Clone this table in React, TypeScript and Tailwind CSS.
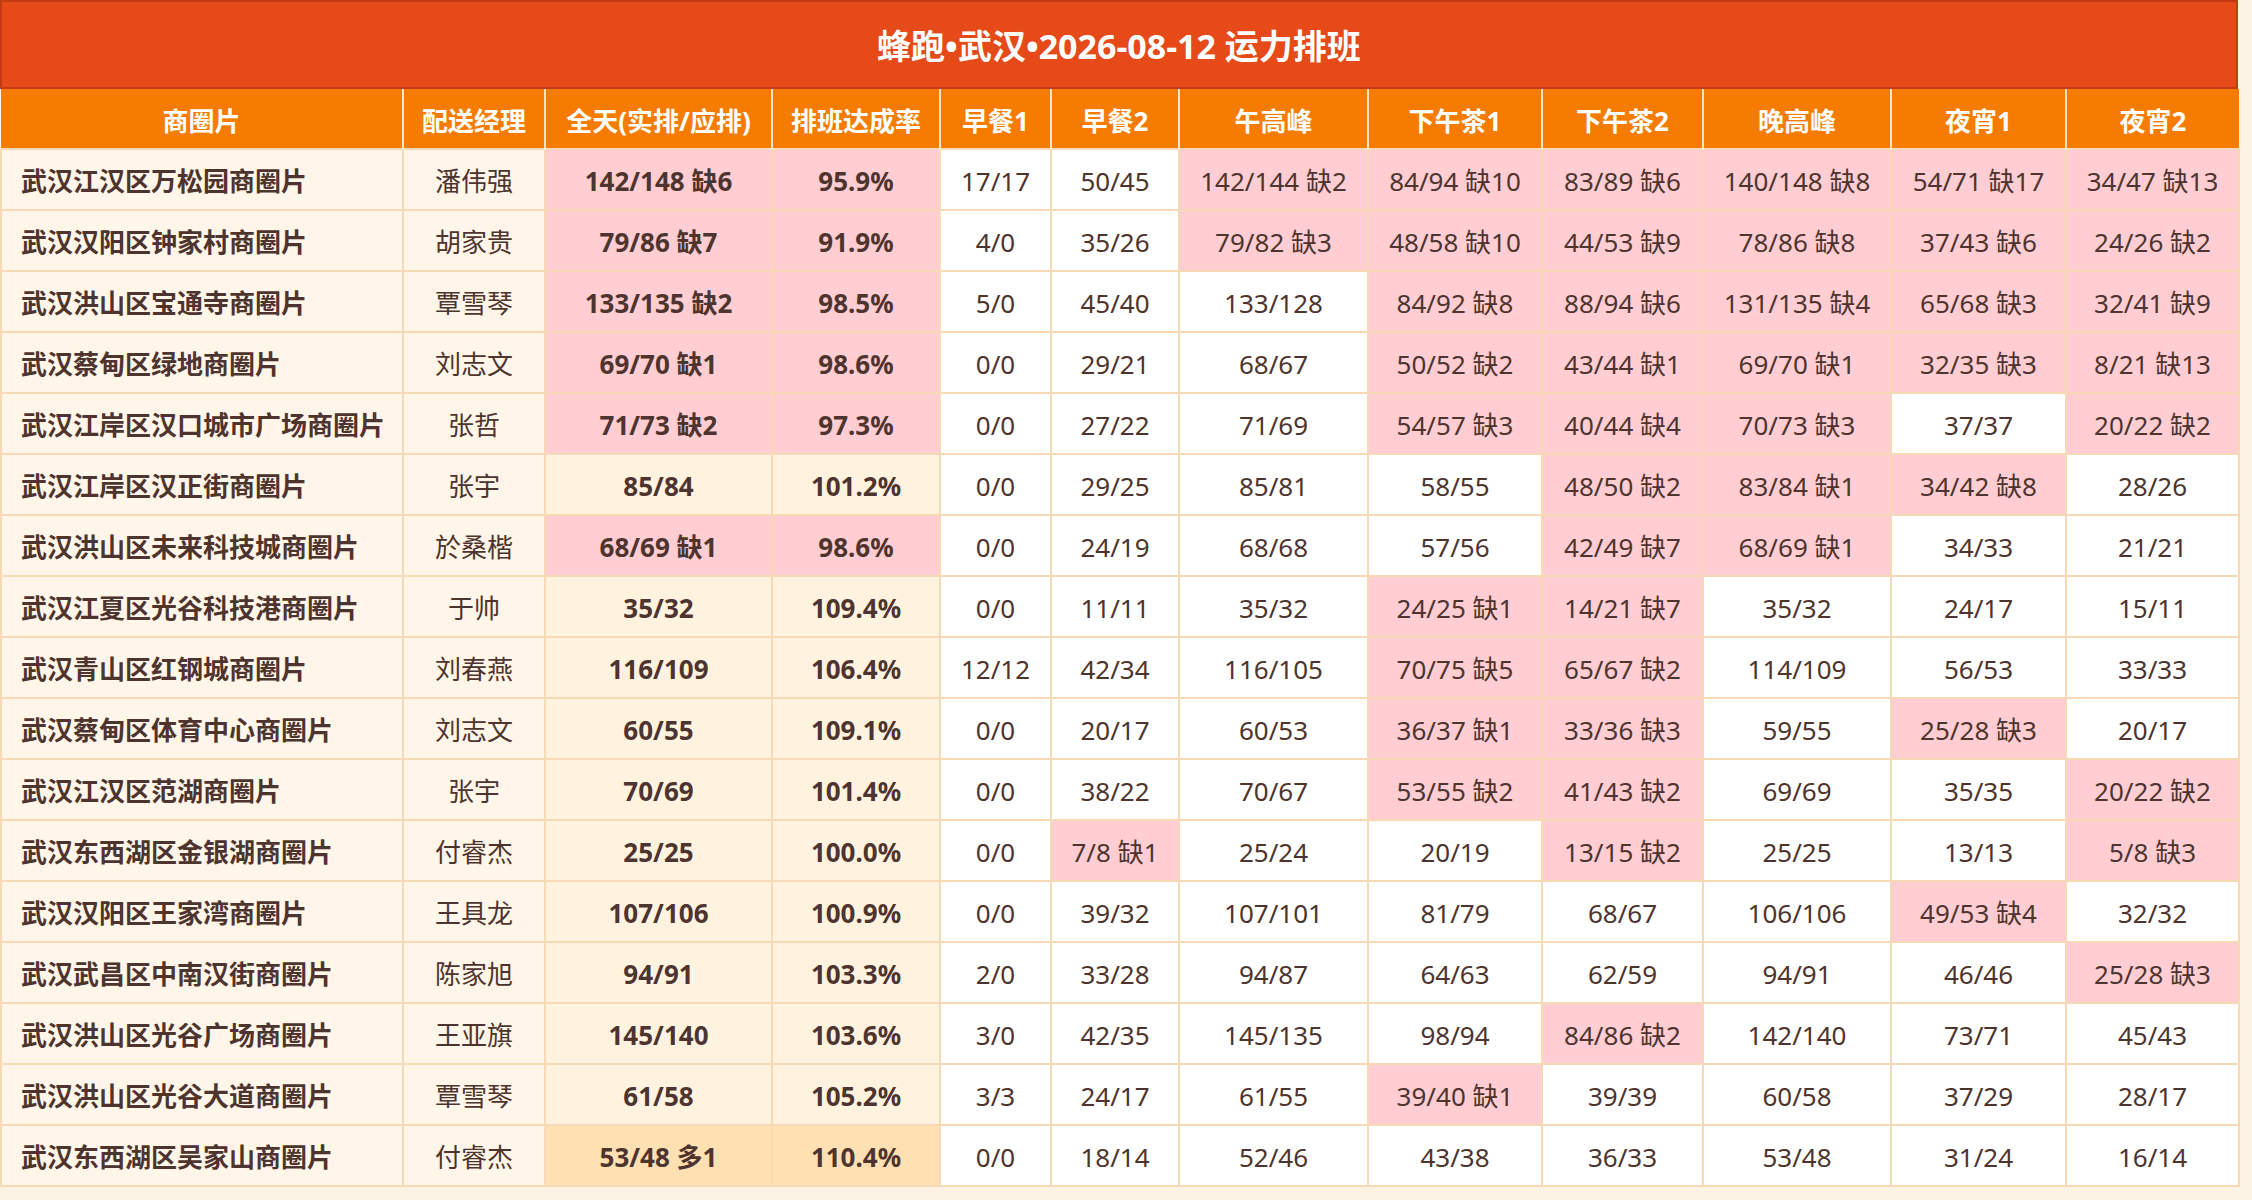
import React from "react";

type Row = [string, string, string, string, ...string[]];

const headers = [
    "商圈片", "配送经理", "全天(实排/应排)", "排班达成率", "早餐1", "早餐2",
    "午高峰", "下午茶1", "下午茶2", "晚高峰", "夜宵1", "夜宵2",
];

const widths = [
    "w-[402px]", "w-[142px]", "w-[227px]", "w-[168px]", "w-[111px]", "w-[128px]",
    "w-[189px]", "w-[174px]", "w-[161px]", "w-[188px]", "w-[175px]", "w-[173px]",
];

const rows: Row[] = [
    ["武汉江汉区万松园商圈片", "潘伟强", "142/148 缺6", "95.9%", "17/17", "50/45", "142/144 缺2", "84/94 缺10", "83/89 缺6", "140/148 缺8", "54/71 缺17", "34/47 缺13"],
    ["武汉汉阳区钟家村商圈片", "胡家贵", "79/86 缺7", "91.9%", "4/0", "35/26", "79/82 缺3", "48/58 缺10", "44/53 缺9", "78/86 缺8", "37/43 缺6", "24/26 缺2"],
    ["武汉洪山区宝通寺商圈片", "覃雪琴", "133/135 缺2", "98.5%", "5/0", "45/40", "133/128", "84/92 缺8", "88/94 缺6", "131/135 缺4", "65/68 缺3", "32/41 缺9"],
    ["武汉蔡甸区绿地商圈片", "刘志文", "69/70 缺1", "98.6%", "0/0", "29/21", "68/67", "50/52 缺2", "43/44 缺1", "69/70 缺1", "32/35 缺3", "8/21 缺13"],
    ["武汉江岸区汉口城市广场商圈片", "张哲", "71/73 缺2", "97.3%", "0/0", "27/22", "71/69", "54/57 缺3", "40/44 缺4", "70/73 缺3", "37/37", "20/22 缺2"],
    ["武汉江岸区汉正街商圈片", "张宇", "85/84", "101.2%", "0/0", "29/25", "85/81", "58/55", "48/50 缺2", "83/84 缺1", "34/42 缺8", "28/26"],
    ["武汉洪山区未来科技城商圈片", "於桑楷", "68/69 缺1", "98.6%", "0/0", "24/19", "68/68", "57/56", "42/49 缺7", "68/69 缺1", "34/33", "21/21"],
    ["武汉江夏区光谷科技港商圈片", "于帅", "35/32", "109.4%", "0/0", "11/11", "35/32", "24/25 缺1", "14/21 缺7", "35/32", "24/17", "15/11"],
    ["武汉青山区红钢城商圈片", "刘春燕", "116/109", "106.4%", "12/12", "42/34", "116/105", "70/75 缺5", "65/67 缺2", "114/109", "56/53", "33/33"],
    ["武汉蔡甸区体育中心商圈片", "刘志文", "60/55", "109.1%", "0/0", "20/17", "60/53", "36/37 缺1", "33/36 缺3", "59/55", "25/28 缺3", "20/17"],
    ["武汉江汉区范湖商圈片", "张宇", "70/69", "101.4%", "0/0", "38/22", "70/67", "53/55 缺2", "41/43 缺2", "69/69", "35/35", "20/22 缺2"],
    ["武汉东西湖区金银湖商圈片", "付睿杰", "25/25", "100.0%", "0/0", "7/8 缺1", "25/24", "20/19", "13/15 缺2", "25/25", "13/13", "5/8 缺3"],
    ["武汉汉阳区王家湾商圈片", "王具龙", "107/106", "100.9%", "0/0", "39/32", "107/101", "81/79", "68/67", "106/106", "49/53 缺4", "32/32"],
    ["武汉武昌区中南汉街商圈片", "陈家旭", "94/91", "103.3%", "2/0", "33/28", "94/87", "64/63", "62/59", "94/91", "46/46", "25/28 缺3"],
    ["武汉洪山区光谷广场商圈片", "王亚旗", "145/140", "103.6%", "3/0", "42/35", "145/135", "98/94", "84/86 缺2", "142/140", "73/71", "45/43"],
    ["武汉洪山区光谷大道商圈片", "覃雪琴", "61/58", "105.2%", "3/3", "24/17", "61/55", "39/40 缺1", "39/39", "60/58", "37/29", "28/17"],
    ["武汉东西湖区吴家山商圈片", "付睿杰", "53/48 多1", "110.4%", "0/0", "18/14", "52/46", "43/38", "36/33", "53/48", "31/24", "16/14"],
];

// 缺 -> 粉色, 多 -> 橙色高亮
const cellBg = (row: Row, i: number) => {
    const over = row[2].includes("多");
    if (i < 2) return "bg-[#fff5e8]";
    if (i === 2) return row[2].includes("缺") ? "bg-[#ffcdd2]" : over ? "bg-[#ffe0b2]" : "bg-[#fff3e0]";
    if (i === 3) return parseFloat(row[3]) < 100 ? "bg-[#ffcdd2]" : over ? "bg-[#ffe0b2]" : "bg-[#fff3e0]";
    return row[i].includes("缺") ? "bg-[#ffcdd2]" : "bg-white";
};

const App = () => {
    return (
        <div className="min-h-screen bg-[#fdf3e5] text-[#4e342e] font-['Noto_Sans','Noto_Sans_CJK_SC',sans-serif]">
            <div className="w-[2238px]">
                <div className="h-[89px] flex items-center justify-center pt-1 bg-[#e64a19] border-2 border-[#c33b12] text-white text-[34px] font-bold">
                    蜂跑•武汉•2026-08-12 运力排班
                </div>
                <table className="w-full table-fixed border-collapse">
                    <colgroup>
                        {widths.map((w, i) => <col key={i} className={w} />)}
                    </colgroup>
                    <thead>
                        <tr className="h-[60px] bg-[#f57c00] text-white">
                            {headers.map((h, i) => (
                                <th key={i} className="text-[26px] font-bold border-x-2 border-[#fde4c4] first:border-l-0 last:border-r-0 px-0 pb-0 pt-[5px]">
                                    {h}
                                </th>
                            ))}
                        </tr>
                    </thead>
                    <tbody>
                        {rows.map((row, r) => (
                            <tr key={r} className="h-[61px]">
                                {row.map((v, i) => (
                                    <td
                                        key={i}
                                        className={`border-2 border-[#f7d9b6] pb-0 pt-[4px] text-[26px] whitespace-nowrap ${cellBg(row, i)} ${i === 0 ? "text-left pl-[19px] pr-0 font-bold" : "text-center px-0"} ${i === 2 || i === 3 ? "font-bold" : ""}`}
                                    >
                                        {v}
                                    </td>
                                ))}
                            </tr>
                        ))}
                    </tbody>
                </table>
            </div>
        </div>
    );
};

export default App;
